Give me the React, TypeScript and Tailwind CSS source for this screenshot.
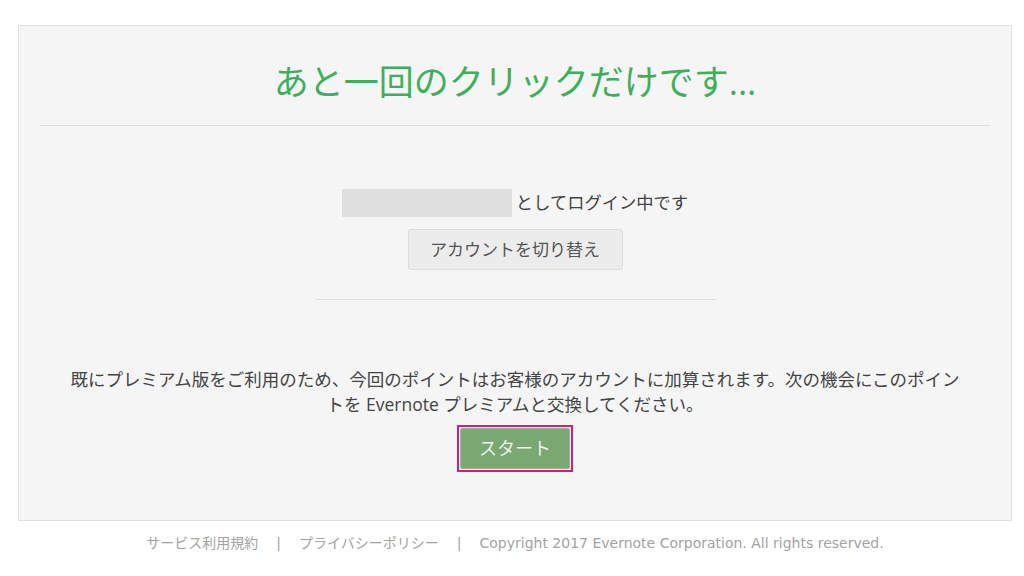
const jp = "font-['Open_Sans','Noto_Sans_CJK_JP',sans-serif]";

function Divider({ className = "" }: { className?: string }) {
  return <div className={`h-px bg-[#dedede] ${className}`} />;
}

export default function App() {
  return (
    <div className={`min-h-[576px] w-[1024px] bg-white ${jp}`}>
      <div className="pr-[12px] pl-[18px] pt-[25px]">
        <div className="flex h-[496px] flex-col border border-[#e0e0e0] bg-[#f5f5f5] px-[21px]">
          <h1 className="mt-[31px] h-[50px] text-center text-[35px] leading-[50px] font-normal text-[#3cb15a]">
            あと一回のクリックだけです...
          </h1>
          <Divider className="mt-[18px]" />

          <div className="mt-[63px] flex items-center justify-center gap-[4px]">
            <div className="h-[28px] w-[170px] bg-[#dfdfdf]" />
            <span className="text-[17.3px] leading-[28px] text-[#444]">としてログイン中です</span>
          </div>

          <div className="mt-[12px] flex justify-center">
            <button className="h-[41px] w-[215px] rounded-[3px] border border-[#dcdcdc] bg-[#ececec] text-[17px] text-[#555]">
              アカウントを切り替え
            </button>
          </div>

          <Divider className="mx-auto mt-[29px] w-[401px]" />

          <p className="mx-auto mt-[67px] w-[900px] text-center text-[17.5px] leading-[25px] text-[#444]">
            既にプレミアム版をご利用のため、今回のポイントはお客様のアカウントに加算されます。次の機会にこのポイントを Evernote プレミアムと交換してください。
          </p>

          <div className="mt-[8px] flex justify-center">
            <div className="border-2 border-[#e0157f] p-px">
              <button className="h-[41px] w-[110px] rounded-[2px] border border-[#96bd91] bg-[#79a873] text-[18px] text-[#eef3ec]">
                スタート
              </button>
            </div>
          </div>
        </div>
      </div>

      <footer className="mt-[12px] flex items-center justify-center pl-[6px] font-['DejaVu_Sans','Noto_Sans_CJK_JP',sans-serif] text-[14px] text-[#a3a3a3]">
        <span>サービス利用規約</span>
        <span className="mx-[18px]">|</span>
        <span>プライバシーポリシー</span>
        <span className="mx-[18px]">|</span>
        <span>Copyright 2017 Evernote Corporation. All rights reserved.</span>
      </footer>
    </div>
  );
}
